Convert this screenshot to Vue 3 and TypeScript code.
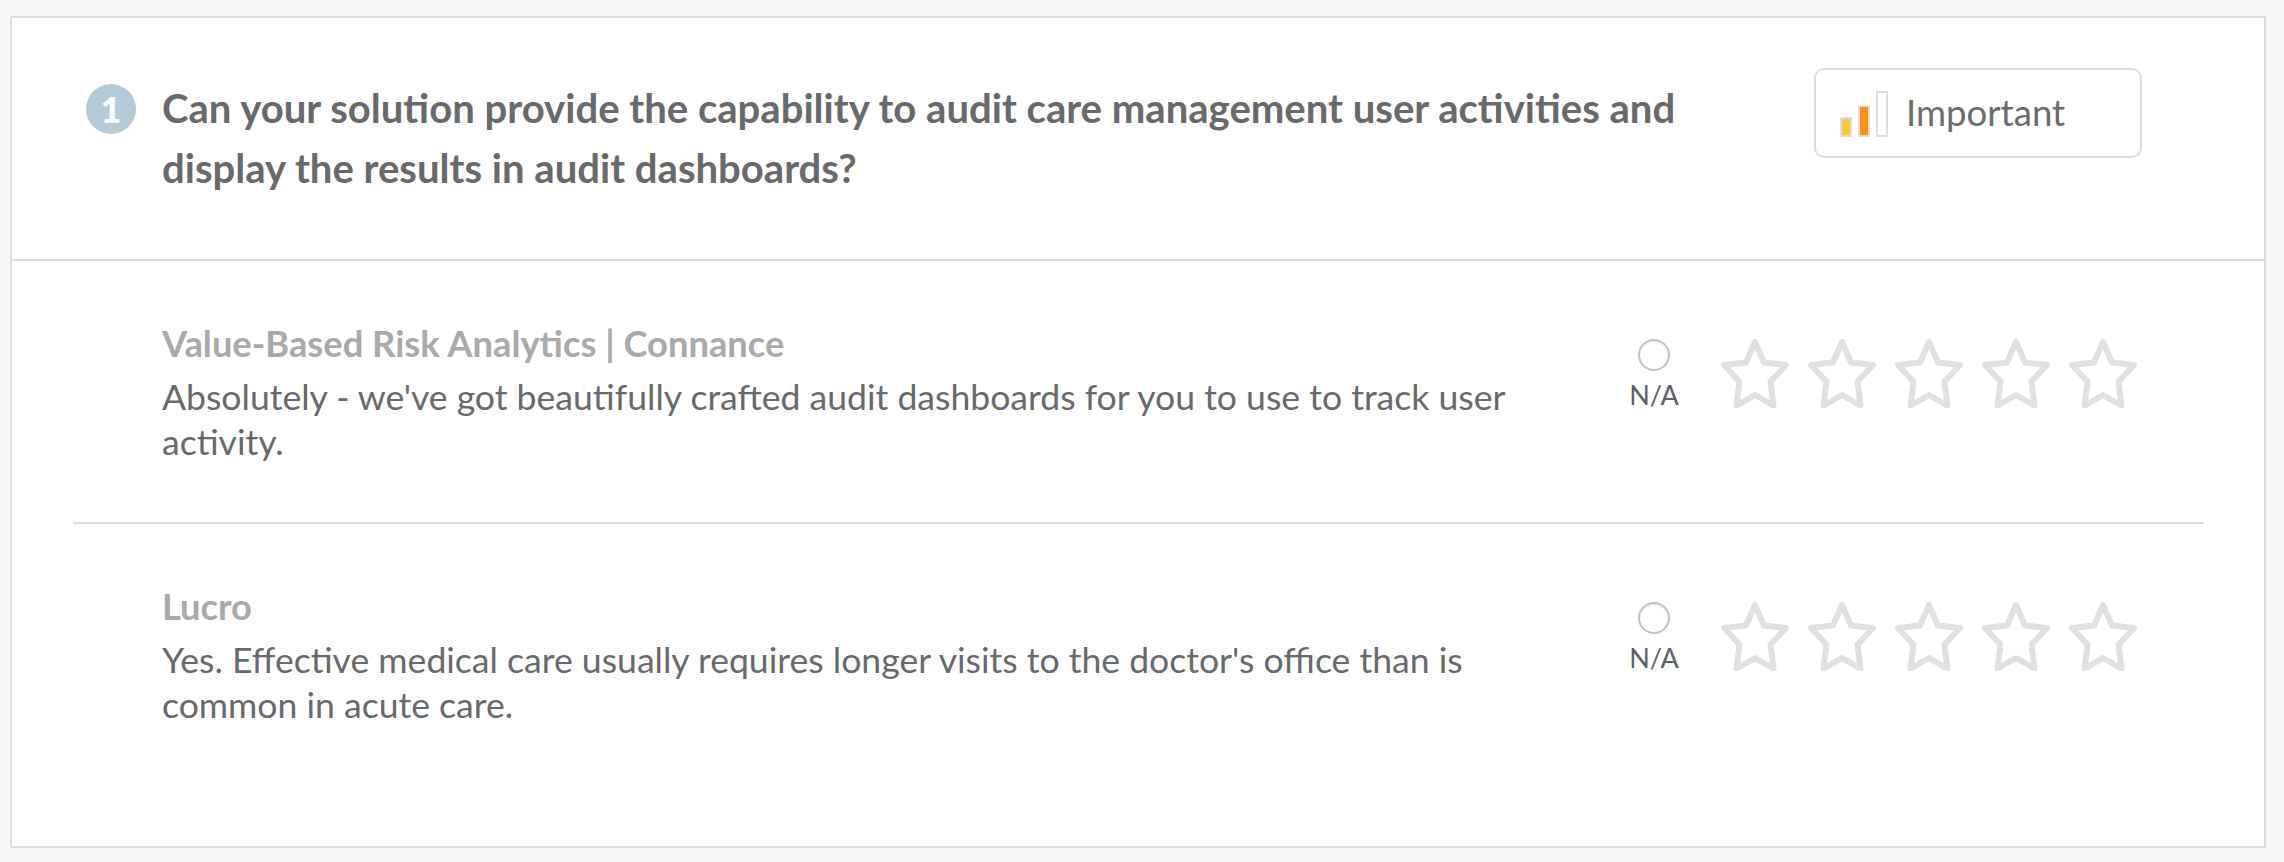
<script setup lang="ts">
interface Answer { title: string; text: string }
const answers: Answer[] = [
  { title: 'Value-Based Risk Analytics | Connance', text: "Absolutely - we've got beautifully crafted audit dashboards for you to use to track user activity." },
  { title: 'Lucro', text: "Yes. Effective medical care usually requires longer visits to the doctor's office than is common in acute care." },
]
const stars = [1, 2, 3, 4, 5]
</script>

<template>
  <div class="page">
    <section class="card">
      <header class="head">
        <span class="badge">1</span>
        <h2 class="question">Can your solution provide the capability to audit care management user activities and display the results in audit dashboards?</h2>
        <div class="importance">
          <span class="bars">
            <i class="bar b1"></i><i class="bar b2"></i><i class="bar b3"></i>
          </span>
          <span class="imp-label">Important</span>
        </div>
      </header>
      <div class="answers">
        <article v-for="a in answers" :key="a.title" class="answer">
          <div class="copy">
            <h3 class="vendor">{{ a.title }}</h3>
            <p class="text">{{ a.text }}</p>
          </div>
          <div class="na">
            <span class="radio"></span>
            <span class="na-label">N/A</span>
          </div>
          <div class="stars">
            <svg v-for="s in stars" :key="s" class="star" viewBox="0 0 68 69" width="68" height="69">
              <path d="M34 3 L43 23.500 L65 26 L49.500 42.500 L52.500 66.500 L34 56 L15.500 66.500 L18.500 42.500 L3 26 L25 23.500 Z" fill="none" stroke="#e0e1de" stroke-width="6" stroke-linejoin="round"/>
            </svg>
          </div>
        </article>
      </div>
    </section>
  </div>
</template>

<style>
html, body { margin: 0; background: #f7f7f7; }
</style>

<style scoped>
.page {
  width: 2284px;
  height: 862px;
  box-sizing: border-box;
  padding: 16px 18px 14px 10px;
  background: #f7f7f7;
  font-family: Lato, sans-serif;
}
.card {
  height: 100%;
  box-sizing: border-box;
  border: 2px solid #dddddd;
  background: #fff;
}
.head {
  height: 243px;
  box-sizing: border-box;
  border-bottom: 2px solid #dddddd;
  display: flex;
  align-items: flex-start;
  padding: 66px 0 0 74px;
  position: relative;
}
.badge {
  flex: none;
  width: 50px;
  height: 50px;
  border-radius: 50%;
  background: #b3cbd9;
  color: #fff;
  font-weight: 900;
  font-size: 36px;
  line-height: 50px;
  text-align: center;
}
.question {
  margin: -6px 0 0 26px;
  width: 1560px;
  font-size: 40.100px;
  line-height: 60px;
  font-weight: 700;
  color: #68696b;
}
.importance {
  box-sizing: border-box;
  position: absolute;
  left: 1802px;
  top: 50px;
  width: 328px;
  height: 90px;
  border: 2px solid #dddddd;
  border-radius: 10px;
  display: flex;
  align-items: center;
  padding-left: 24px;
}
.bars {
  display: flex;
  align-items: flex-end;
  gap: 6px;
  height: 46px;
  margin-top: 2px;
}
.bar {
  display: block;
  width: 12px;
  box-sizing: border-box;
  border: 2px solid #dddddd;
}
.b1 { height: 20px; background: #f5cb36; }
.b2 { height: 32px; background: #fa9214; }
.b3 { height: 46px; background: #fff; }
.imp-label {
  margin-left: 18px;
  margin-top: -2px;
  font-size: 36.600px;
  color: #6b6c6e;
}
.answers {
  padding: 0 60px 0 61px;
}
.answer {
  box-sizing: border-box;
  padding-top: 61px;
  display: flex;
  align-items: flex-start;
}
.answer:first-child {
  height: 263px;
  border-bottom: 2px solid #dddddd;
}
.answer:last-child { height: 262px; }
.copy {
  width: 1401px;
  padding-left: 89px;
  flex: none;
}
.vendor {
  margin: 0;
  font-size: 36.300px;
  line-height: 42px;
  font-weight: 700;
  color: #a9a9a9;
}
.text {
  margin: 10px 0 0;
  font-size: 35.600px;
  line-height: 45px;
  color: #68696b;
}
.na {
  flex: none;
  width: 70px;
  margin-left: 56px;
  margin-top: 17px;
  display: flex;
  flex-direction: column;
  align-items: center;
}
.radio {
  width: 32px;
  height: 32px;
  box-sizing: border-box;
  border-radius: 50%;
  border: 2px solid #c2c2c2;
  background: #fff;
  box-shadow: inset 0 1px 2px rgba(0, 0, 0, 0.1);
}
.na-label {
  margin-top: 7px;
  font-family: Lato, sans-serif;
  font-size: 27px;
  line-height: 34px;
  color: #5d6067;
}
.stars {
  display: flex;
  gap: 19px;
  margin-left: 32px;
  margin-top: 17px;
}
.star { display: block; flex: none; }
</style>
